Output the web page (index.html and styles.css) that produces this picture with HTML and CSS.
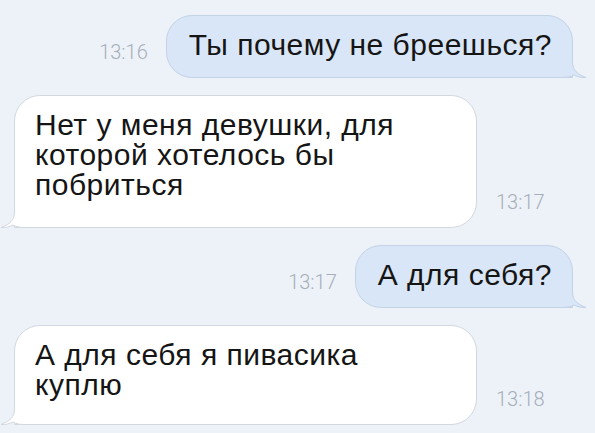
FILE: index.html
```html
<!DOCTYPE html>
<html lang="ru">
<head>
    <meta charset="UTF-8">
    <meta name="viewport" content="width=device-width, initial-scale=1.0">
    <title>Чат</title>
    <link rel="stylesheet" href="styles.css">
</head>
<body>
    <div class="chat">
        <div class="row row-out">
            <span class="time">13:16</span>
            <div class="bubble bubble-out">
                Ты почему не бреешься?
                <svg class="tail" width="35" height="30" viewBox="0 0 35 30">
                    <path class="tail-fill" d="M0,0 H20.5 V14 C20.5,22 25,26 34,29.5 C29,30 25,28.5 22,27 C19,29 15,29.5 10,29.5 H0 Z"/>
                    <path class="tail-line" d="M20.5,0 V14 C20.5,22 25,26 34,29.5 C29,30 25,28.5 22,27 C19,29 15,29.5 10,29.5 H0"/>
                </svg>
            </div>
        </div>

        <div class="row row-in">
            <div class="bubble bubble-in">
                Нет у меня девушки, для<br>которой хотелось бы<br>побриться
                <svg class="tail" width="35" height="30" viewBox="0 0 35 30">
                    <path class="tail-fill" d="M0,0 H20.5 V14 C20.5,22 25,26 34,29.5 C29,30 25,28.5 22,27 C19,29 15,29.5 10,29.5 H0 Z"/>
                    <path class="tail-line" d="M20.5,0 V14 C20.5,22 25,26 34,29.5 C29,30 25,28.5 22,27 C19,29 15,29.5 10,29.5 H0"/>
                </svg>
            </div>
            <span class="time">13:17</span>
        </div>

        <div class="row row-out">
            <span class="time">13:17</span>
            <div class="bubble bubble-out">
                А для себя?
                <svg class="tail" width="35" height="30" viewBox="0 0 35 30">
                    <path class="tail-fill" d="M0,0 H20.5 V14 C20.5,22 25,26 34,29.5 C29,30 25,28.5 22,27 C19,29 15,29.5 10,29.5 H0 Z"/>
                    <path class="tail-line" d="M20.5,0 V14 C20.5,22 25,26 34,29.5 C29,30 25,28.5 22,27 C19,29 15,29.5 10,29.5 H0"/>
                </svg>
            </div>
        </div>

        <div class="row row-in">
            <div class="bubble bubble-in bubble-short">
                А для себя я пивасика<br>куплю
                <svg class="tail" width="35" height="30" viewBox="0 0 35 30">
                    <path class="tail-fill" d="M0,0 H20.5 V14 C20.5,22 25,26 34,29.5 C29,30 25,28.5 22,27 C19,29 15,29.5 10,29.5 H0 Z"/>
                    <path class="tail-line" d="M20.5,0 V14 C20.5,22 25,26 34,29.5 C29,30 25,28.5 22,27 C19,29 15,29.5 10,29.5 H0"/>
                </svg>
            </div>
            <span class="time">13:18</span>
        </div>
    </div>
</body>
</html>
```

FILE: styles.css
```css
html, body {
    margin: 0;
    height: 100%;
}
body {
    font-family: "Liberation Sans", Arial, sans-serif;
    background-color: #edf2f9;
    color: #151515;
    overflow: hidden;
}
.chat {
    display: flex;
    flex-direction: column;
    gap: 17px;
    padding: 15px 22px 0 14px;
}
.row {
    display: flex;
    align-items: flex-end;
    gap: 18px;
}
.row-in {
    gap: 19px;
}
.row-out {
    justify-content: flex-end;
}
.time {
    font-family: Roboto, "Liberation Sans", sans-serif;
    font-weight: 300;
    font-size: 20px;
    line-height: 20px;
    color: #a6aeb8;
    margin-bottom: 16px;
}
.bubble {
    position: relative;
    font-size: 30px;
    line-height: 30px;
    letter-spacing: 0.5px;
    padding: 14px 20px 17px 22px;
    border: 1px solid;
    border-radius: 26px;
}
.bubble-out {
    background-color: #d9e6f7;
    border-color: #c3d2e5;
    border-bottom-right-radius: 0;
}
.bubble-in {
    width: 421px;
    background-color: #fff;
    border-color: #d2d8e0;
    border-bottom-left-radius: 0;
    padding-left: 20px;
    padding-bottom: 27px;
}
.bubble-short {
    padding-bottom: 24px;
}
.tail {
    position: absolute;
    bottom: -1px;
    right: -15px;
    overflow: visible;
}
.bubble-in .tail {
    right: auto;
    left: -15px;
    transform: scaleX(-1);
}
.tail-line {
    fill: none;
    stroke-width: 1;
}
.bubble-out .tail-fill {
    fill: #d9e6f7;
}
.bubble-out .tail-line {
    stroke: #c3d2e5;
}
.bubble-in .tail-fill {
    fill: #fff;
}
.bubble-in .tail-line {
    stroke: #d2d8e0;
}
```
